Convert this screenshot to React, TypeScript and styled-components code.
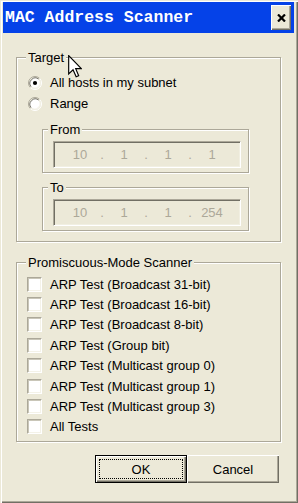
import React from "react";
import styled, { createGlobalStyle } from "styled-components";

const Global = createGlobalStyle`
  html, body { margin: 0; padding: 0; background: #ECE9D8; }
  body { font-family: "Liberation Sans", Arial, sans-serif; font-size: 13px; color: #000; }
`;

const Window = styled.div`
  position: relative;
  width: 298px;
  height: 503px;
  box-sizing: border-box;
  background: #ECE9D8;
  box-shadow: inset 1px 1px 0 #ECE9D8, inset 2px 2px 0 #fff, inset -1px -1px 0 #716F64, inset -2px -2px 0 #ACA899;
  overflow: hidden;
`;

const TitleBar = styled.div`
  margin: 2px 4px 0 3px;
  height: 31px;
  background: #0542E8;
  display: flex;
  align-items: center;
  justify-content: space-between;
  padding: 0 3px 0 2px;
`;

const Title = styled.span`
  font-family: "Liberation Mono", "Courier New", monospace;
  font-weight: bold;
  font-size: 16.5px;
  color: #fff;
  white-space: pre;
`;

const CloseButton = styled.div`
  width: 20px;
  height: 25px;
  box-sizing: border-box;
  background: #ECE9D8;
  display: flex;
  align-items: center;
  justify-content: center;
  box-shadow: inset 1px 1px 0 #fff, inset -1px -1px 0 #716F64, inset -2px -2px 0 #ACA899;
`;

const Content = styled.div`
  padding: 0 17px 0 16px;
  display: flex;
  flex-direction: column;
`;

const Group = styled.div<{ $mt: number; $pt: number; $pb: number; $pl: number; $pr?: number; $ml?: number; $mr?: number }>`
  position: relative;
  margin-top: ${(p) => p.$mt}px;
  margin-left: ${(p) => p.$ml ?? 0}px;
  margin-right: ${(p) => p.$mr ?? 0}px;
  padding: ${(p) => p.$pt}px ${(p) => p.$pr ?? 0}px ${(p) => p.$pb}px ${(p) => p.$pl}px;
  border: 1px solid #ACA899;
  box-shadow: inset 1px 1px 0 #fff, 1px 1px 0 #fff;
  display: flex;
  flex-direction: column;
`;

const Legend = styled.span<{ $left: number }>`
  position: absolute;
  top: -8px;
  left: ${(p) => p.$left}px;
  padding: 0 2px;
  line-height: 15px;
  background: #ECE9D8;
  white-space: nowrap;
`;

const OptionRow = styled.label<{ $h: number }>`
  display: flex;
  align-items: center;
  height: ${(p) => p.$h}px;
  white-space: nowrap;
`;

const RadioMark = styled.svg`
  width: 14px;
  height: 14px;
  margin-left: -1px;
  margin-right: 8px;
  flex: none;
`;

const CheckMark = styled.span`
  width: 15px;
  height: 15px;
  margin-left: -1px;
  margin-right: 8px;
  box-sizing: border-box;
  flex: none;
  background: #fff;
  border-top: 1px solid #ACA899;
  border-left: 1px solid #ACA899;
  border-right: 1px solid #fff;
  border-bottom: 1px solid #fff;
  box-shadow: inset 1px 1px 0 #C9C6B8, inset -1px -1px 0 #F4F2E8;
`;

const IpField = styled.div`
  height: 27px;
  box-sizing: border-box;
  border-top: 1px solid #ACA899;
  border-left: 1px solid #ACA899;
  border-right: 1px solid #fff;
  border-bottom: 1px solid #fff;
  box-shadow: inset 1px 1px 0 #716F64, inset -1px -1px 0 #F1EFE2;
  background: #ECE9D8;
  display: flex;
  align-items: center;
  padding-left: 8px;
  color: #ACA899;
`;

const Octet = styled.span`
  width: 36px;
  text-align: center;
`;

const Dot = styled.span`
  width: 8px;
  text-align: center;
`;

const ButtonRow = styled.div`
  display: flex;
  justify-content: flex-end;
  margin-top: 13px;
  margin-right: 2px;
`;

const Button = styled.div<{ $default?: boolean }>`
  position: relative;
  width: 92px;
  height: 28px;
  box-sizing: border-box;
  display: flex;
  align-items: center;
  justify-content: center;
  background: #ECE9D8;
  border: ${(p) => (p.$default ? "1px solid #000" : "none")};
  box-shadow: inset 1px 1px 0 #fff, inset -1px -1px 0 #716F64, inset -2px -2px 0 #ACA899;
`;

const FocusRect = styled.span`
  position: absolute;
  inset: 3px;
  border: 1px dotted #000;
`;

const ButtonText = styled.span`
  position: relative;
`;

const Cursor = styled.svg`
  position: absolute;
  left: 68px;
  top: 55px;
  width: 14px;
  height: 23px;
`;

function Radio({ checked }: { checked?: boolean }) {
  return (
    <RadioMark viewBox="0 0 14 14">
      <path d="M2.4 11.6 A6.5 6.5 0 0 1 11.6 2.4" fill="none" stroke="#ACA899" strokeWidth="1" />
      <path d="M11.6 2.4 A6.5 6.5 0 0 1 2.4 11.6" fill="none" stroke="#fff" strokeWidth="1" />
      <circle cx="7" cy="7" r="5.5" fill="#fff" />
      <path d="M3.2 10.8 A5.4 5.4 0 0 1 10.8 3.2" fill="none" stroke="#716F64" strokeWidth="1" />
      <path d="M10.8 3.2 A5.4 5.4 0 0 1 3.2 10.8" fill="none" stroke="#F1EFE2" strokeWidth="1" />
      {checked && <circle cx="7" cy="7" r="2.1" fill="#000" />}
    </RadioMark>
  );
}

function Ip({ parts }: { parts: string[] }) {
  return (
    <IpField>
      {parts.map((p, i) => (
        <React.Fragment key={i}>
          {i > 0 && <Dot>.</Dot>}
          <Octet>{p}</Octet>
        </React.Fragment>
      ))}
    </IpField>
  );
}

const tests = [
  "ARP Test (Broadcast 31-bit)",
  "ARP Test (Broadcast 16-bit)",
  "ARP Test (Broadcast 8-bit)",
  "ARP Test (Group bit)",
  "ARP Test (Multicast group 0)",
  "ARP Test (Multicast group 1)",
  "ARP Test (Multicast group 3)",
  "All Tests",
];

export default function App() {
  return (
    <>
      <Global />
      <Window>
        <TitleBar>
          <Title>MAC Address Scanner</Title>
          <CloseButton>
            <svg width="9" height="8" viewBox="0 0 9 8">
              <path d="M1 0.5 L8 7.5 M8 0.5 L1 7.5" stroke="#000" strokeWidth="2.2" />
            </svg>
          </CloseButton>
        </TitleBar>
        <Content>
          <Group $mt={24} $pt={14} $pb={10} $pl={12}>
            <Legend $left={9}>Target</Legend>
            <OptionRow $h={21}>
              <Radio checked />
              All hosts in my subnet
            </OptionRow>
            <OptionRow $h={21}>
              <Radio />
              Range
            </OptionRow>
            <Group $mt={15} $ml={13} $mr={31} $pt={11} $pb={4} $pl={10} $pr={7}>
              <Legend $left={5}>From</Legend>
              <Ip parts={["10", "1", "1", "1"]} />
            </Group>
            <Group $mt={14} $ml={13} $mr={31} $pt={11} $pb={4} $pl={10} $pr={7}>
              <Legend $left={5}>To</Legend>
              <Ip parts={["10", "1", "1", "254"]} />
            </Group>
          </Group>
          <Group $mt={20} $pt={11} $pb={4} $pl={11}>
            <Legend $left={9}>Promiscuous-Mode Scanner</Legend>
            {tests.map((t) => (
              <OptionRow key={t} $h={20.4}>
                <CheckMark />
                {t}
              </OptionRow>
            ))}
          </Group>
          <ButtonRow>
            <Button $default>
              <FocusRect />
              <ButtonText>OK</ButtonText>
            </Button>
            <Button>
              <ButtonText>Cancel</ButtonText>
            </Button>
          </ButtonRow>
        </Content>
        <Cursor viewBox="0 0 12 20">
          <path d="M0.5 0.5 L0.5 16.5 L4.3 12.8 L7 19 L9.2 18 L6.6 11.9 L11.5 11.9 Z" fill="#fff" stroke="#000" strokeWidth="1" strokeLinejoin="miter" />
        </Cursor>
      </Window>
    </>
  );
}
